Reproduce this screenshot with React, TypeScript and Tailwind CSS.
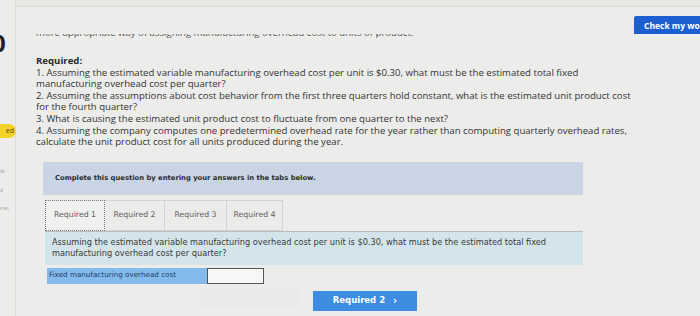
const questions = [
  ["1. Assuming the estimated variable manufacturing overhead cost per unit is $0.30, what must be the estimated total fixed", "manufacturing overhead cost per quarter?"],
  ["2. Assuming the assumptions about cost behavior from the first three quarters hold constant, what is the estimated unit product cost", "for the fourth quarter?"],
  ["3. What is causing the estimated unit product cost to fluctuate from one quarter to the next?"],
  ["4. Assuming the company computes one predetermined overhead rate for the year rather than computing quarterly overhead rates,", "calculate the unit product cost for all units produced during the year."],
];

const tabs = [
  { id: "r1", label: "Required 1", w: "w-[60px]", active: true },
  { id: "r2", label: "Required 2", w: "w-[60px]", active: false },
  { id: "r3", label: "Required 3", w: "w-[62px]", active: false },
  { id: "r4", label: "Required 4", w: "w-[56px]", active: false },
];

export default function App() {
  return (
    <div className="flex h-[316px] w-[700px] overflow-hidden bg-[#ecedea] font-['Open_Sans',sans-serif] text-[#383838]">
      <aside className="flex w-[16px] shrink-0 flex-col border-r border-[#dcdcd8] pt-[30px]">
        <div className="-ml-[8px] text-[24px] leading-[26px] font-bold text-[#222]">0</div>
        <div className="mt-[68px] flex h-[14px] w-[16px] items-center justify-end rounded-r-full bg-[#f3d22a] pr-[2px] text-[7px] text-[#5a4a10]">ed</div>
        <div className="mt-[30px] flex flex-col gap-[11px] text-[5px] text-[#9a9a98]">
          <span className="-ml-[1px]">ok</span>
          <span>d</span>
          <span className="-ml-[2px]">nces</span>
        </div>
      </aside>

      <main className="flex flex-1 flex-col">
        <div className="h-[7px] border-b border-[#dadad6] bg-[#e8e8e5]" />
        <div className="flex h-[27px] justify-end pt-[4px]">
          <div className="w-[66px] overflow-hidden">
            <button className="h-[20px] whitespace-nowrap rounded-l-[2px] bg-[#1d5fd2] pl-[10px] pr-[10px] text-[8.5px] font-bold text-white">
              Check my work
            </button>
          </div>
        </div>

        <div className="h-[6px] overflow-hidden pl-[20px]">
          <p className="-mt-[7px] text-[9.6px] leading-[12px] whitespace-nowrap text-[#555]">
            more appropriate way of assigning manufacturing overhead cost to units of product.
          </p>
        </div>

        <section className="mt-[15px] pl-[20px] text-[9.6px] leading-[11.6px] text-[#333]">
          <h3 className="font-bold text-[#2a2a2a]">Required:</h3>
          {questions.map((lines, i) => (
            <div key={i}>
              {lines.map((l, j) => (
                <div key={j} className="whitespace-nowrap">{l}</div>
              ))}
            </div>
          ))}
        </section>

        <div className="ml-[27px] mt-[14px] w-[540px] font-['DejaVu_Sans',sans-serif]">
          <div className="flex h-[33px] items-center bg-[#c9d5e5] pl-[12px] text-[6.8px] font-bold text-[#2c2c2c]">
            Complete this question by entering your answers in the tabs below.
          </div>

          <div className="ml-[2px] mt-[5px] flex border-b border-[#b9bcbf]">
            {tabs.map((t) => (
              <div
                key={t.id}
                className={`flex h-[31px] ${t.w} items-center justify-center text-[7.8px] text-[#5e5e5e] ${
                  t.active ? "border border-dotted border-[#777] bg-[#f0f0ee]" : "border border-l-0 border-[#d4d4d2] bg-[#ebebea]"
                }`}
              >
                {t.label}
              </div>
            ))}
          </div>

          <div className="ml-[2px] bg-[#d3e5ea] px-[7px] pt-[5px] pb-[6px] text-[8.2px] leading-[11px] text-[#3a3a3a]">
            <div className="whitespace-nowrap">Assuming the estimated variable manufacturing overhead cost per unit is $0.30, what must be the estimated total fixed</div>
            <div className="whitespace-nowrap">manufacturing overhead cost per quarter?</div>
          </div>

          <div className="ml-[4px] mt-[3px] flex h-[16px]">
            <div className="flex w-[160px] items-center bg-[#84bbec] pl-[2px] text-[7.2px] text-[#1d3b66]">
              Fixed manufacturing overhead cost
            </div>
            <div className="w-[57px] border border-[#555] bg-[#f7f7f6]" />
          </div>

          <div className="mt-[7px] flex">
            <div className="ml-[157px] mt-[-3px] h-[20px] w-[100px] bg-[#e8eaeb]" />
            <button className="ml-[13px] flex h-[20px] w-[104px] items-center justify-center gap-[8px] bg-[#3d8de0] text-[8.5px] font-bold text-white">
              <span>Required 2</span>
              <span className="text-[10px]">&#8250;</span>
            </button>
          </div>
        </div>
      </main>
    </div>
  );
}
